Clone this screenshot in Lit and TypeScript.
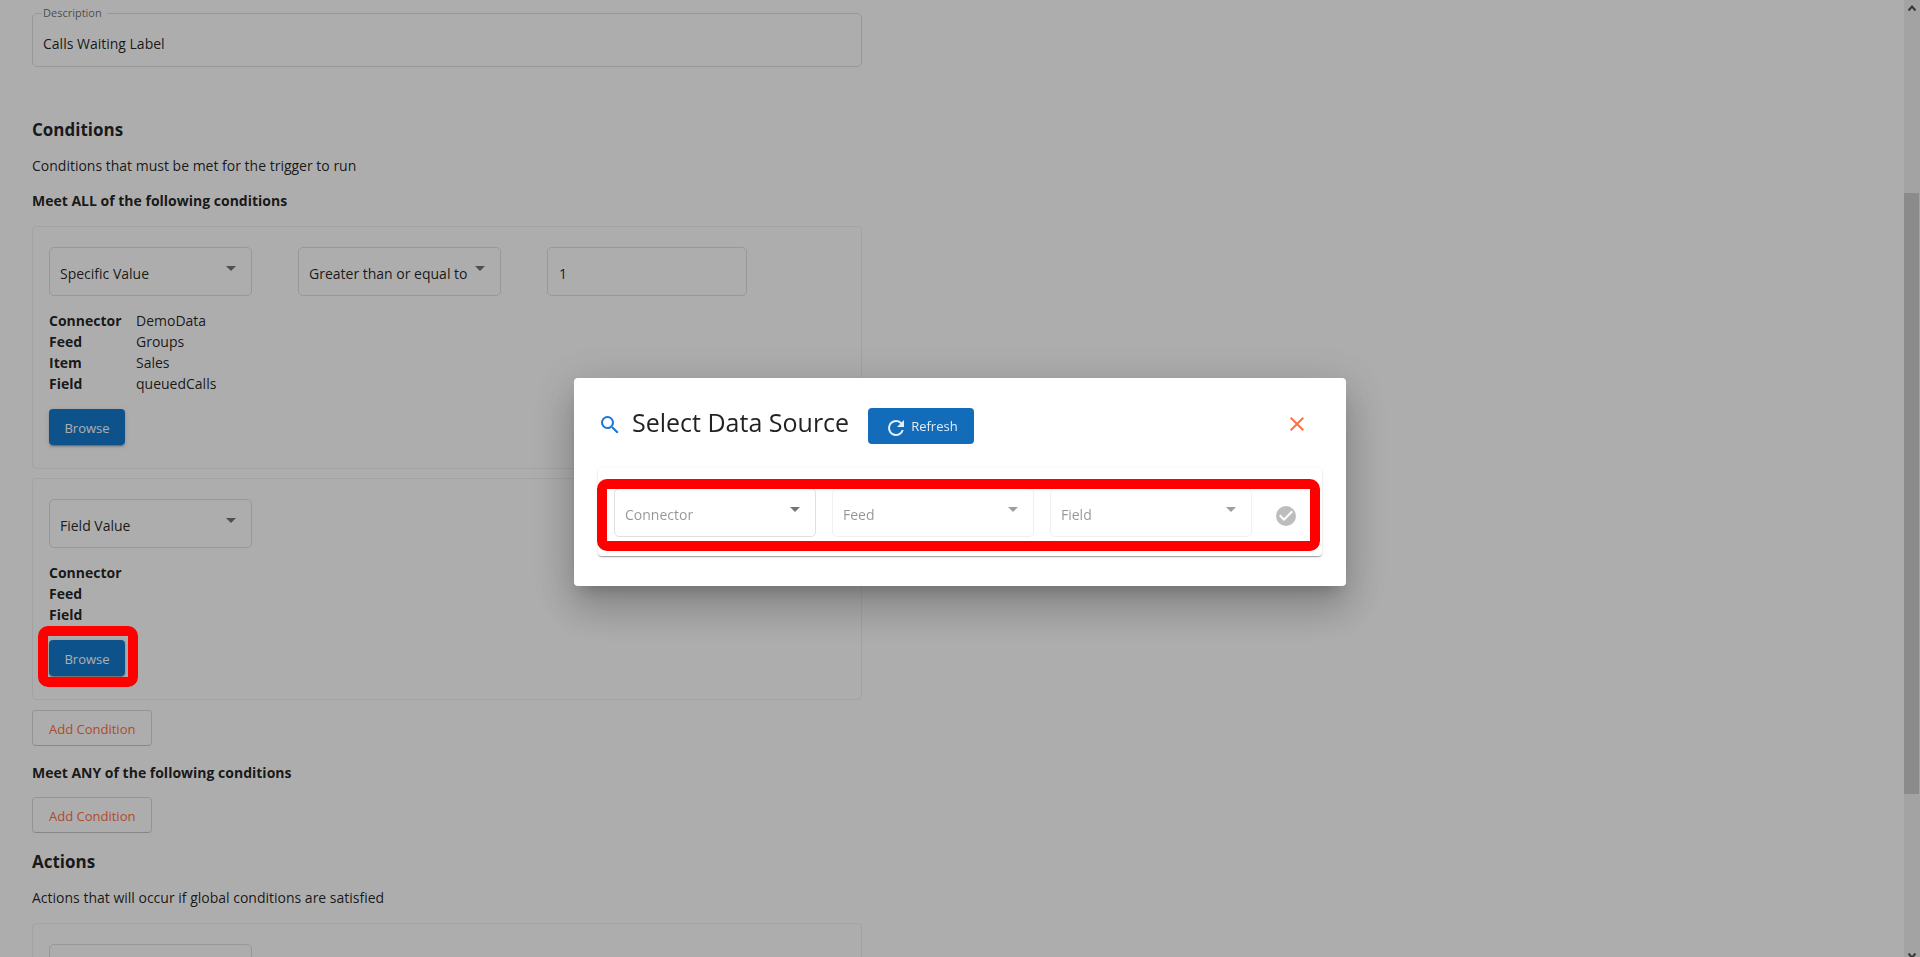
import { LitElement, html, css, svg, nothing } from "lit";
import { customElement, property } from "lit/decorators.js";

const ICONS = {
  search: svg`<path d="M15.5 14h-.79l-.28-.27A6.47 6.47 0 0 0 16 9.5 6.5 6.5 0 1 0 9.5 16c1.61 0 3.09-.59 4.23-1.57l.27.28v.79l5 4.99L20.49 19l-4.99-5zm-6 0C7.01 14 5 11.99 5 9.5S7.01 5 9.5 5 14 7.01 14 9.5 11.99 14 9.5 14z"/>`,
  refresh: svg`<path d="M17.65 6.35A7.96 7.96 0 0 0 12 4a8 8 0 1 0 7.73 10h-2.08A6 6 0 1 1 12 6c1.66 0 3.14.69 4.22 1.78L13 11h7V4l-2.35 2.35z"/>`,
  close: svg`<path d="M19 6.41 17.59 5 12 10.59 6.41 5 5 6.41 10.59 12 5 17.59 6.41 19 12 13.41 17.59 19 19 17.59 13.41 12z"/>`,
  check: svg`<path d="M12 2a10 10 0 1 0 0 20 10 10 0 0 0 0-20zm-2 15-5-5 1.41-1.41L10 14.17l7.59-7.59L19 8l-9 9z"/>`,
};

const icon = (name: keyof typeof ICONS) =>
  html`<svg class="icon" viewBox="0 0 24 24" width="24" height="24" aria-hidden="true">${ICONS[name]}</svg>`;

const controls = css`
  * { box-sizing: border-box; }
  button {
    font: inherit;
    font-size: 13px;
    line-height: 20px;
    height: 36px;
    padding: 2px 15px 0;
    border: 0;
    border-radius: 4px;
    cursor: pointer;
  }
  .primary {
    min-width: 76px;
    background: #167ace;
    color: #fff;
    box-shadow: 0 3px 1px -2px rgba(0, 0, 0, 0.2), 0 2px 2px rgba(0, 0, 0, 0.14), 0 1px 5px rgba(0, 0, 0, 0.12);
  }
  .icon { fill: currentColor; display: block; flex: none; }
  .callout {
    position: absolute;
    border: 10px solid #f00;
    border-radius: 10px;
    pointer-events: none;
    z-index: 3;
  }
`;

@customElement("select-box")
export class SelectBox extends LitElement {
  @property() label = "";
  @property() value = "";
  @property({ type: Boolean }) placeholder = false;
  @property({ type: Boolean }) disabled = false;

  static styles = css`
    :host { display: block; }
    * { box-sizing: border-box; }
    .box { position: relative; display: block; }
    select {
      appearance: none;
      display: block;
      width: 100%;
      height: 49px;
      margin: 0;
      padding: 4px 24px 0 10px;
      border: 1px solid rgba(0, 0, 0, 0.12);
      border-radius: 5px;
      background: transparent;
      font: inherit;
      color: rgba(0, 0, 0, 0.87);
      opacity: 1;
    }
    .placeholder { color: rgba(0, 0, 0, 0.42); }
    select:disabled { border-color: rgba(0, 0, 0, 0.06); }
    .arrow {
      position: absolute;
      right: 16px;
      top: 19px;
      border: 5px solid transparent;
      border-top-color: rgba(0, 0, 0, 0.54);
      border-bottom: 0;
      pointer-events: none;
    }
    select:disabled + .arrow { border-top-color: rgba(0, 0, 0, 0.38); }
  `;

  render() {
    return html`<span class="box">
      <select class=${this.placeholder ? "placeholder" : ""} aria-label=${this.label} ?disabled=${this.disabled}>
        ${this.value ? html`<option>${this.value}</option>` : nothing}
      </select>
      <span class="arrow"></span>
    </span>`;
  }
}

type Row = [string, string];

@customElement("condition-card")
export class ConditionCard extends LitElement {
  @property() source = "";
  @property() operator = "";
  @property() operand = "";
  @property({ attribute: false }) rows: Row[] = [];
  @property({ type: Boolean }) highlighted = false;

  static styles = [
    controls,
    css`
      :host {
        display: block;
        padding: 20px 16px 23px;
        border: 1px solid rgba(0, 0, 0, 0.06);
        border-radius: 4px;
      }
      .fields { display: grid; grid-template-columns: 203px 203px 200px; gap: 46px; }
      input {
        width: 100%;
        height: 49px;
        padding: 3px 11px 0;
        border: 1px solid rgba(0, 0, 0, 0.12);
        border-radius: 5px;
        background: transparent;
        font: inherit;
        color: rgba(0, 0, 0, 0.87);
      }
      dl {
        display: grid;
        grid-template-columns: 87px 1fr;
        margin: 14px 0 15px;
        line-height: 21px;
      }
      dt { font-weight: 700; }
      dd { margin: 0; }
      .action { position: relative; display: block; width: max-content; }
      .around { inset: -14px -13px -11px -11px; }
    `,
  ];

  render() {
    return html`
      <div class="fields">
        <select-box label="Value type" value=${this.source}></select-box>
        ${this.operator
          ? html`<select-box label="Comparison" value=${this.operator}></select-box>
              <input aria-label="Value" .value=${this.operand} />`
          : nothing}
      </div>
      ${this.rows.length
        ? html`<dl>${this.rows.map(([k, v]) => html`<dt>${k}</dt><dd>${v}</dd>`)}</dl>
            <div class="action">
              <button class="primary" type="button">Browse</button>
              ${this.highlighted ? html`<span class="callout around"></span>` : nothing}
            </div>`
        : nothing}
    `;
  }
}

@customElement("source-dialog")
export class SourceDialog extends LitElement {
  static styles = [
    controls,
    css`
      :host {
        position: fixed;
        inset: 0;
        z-index: 2;
        display: flex;
        align-items: center;
        justify-content: center;
        padding-top: 7px;
        background: rgba(0, 0, 0, 0.32);
      }
      .dialog {
        width: 772px;
        max-width: 90vw;
        padding: 30px 24px;
        border-radius: 4px;
        background: #fff;
        box-shadow: 0 11px 15px -7px rgba(0, 0, 0, 0.2), 0 24px 38px 3px rgba(0, 0, 0, 0.14),
          0 9px 46px 8px rgba(0, 0, 0, 0.12);
      }
      header { display: flex; align-items: flex-start; height: 36px; }
      .search { color: #1976d2; padding-top: 5px; }
      h2 { margin: 0 19px 0 10px; font-size: 25px; line-height: 28px; font-weight: 400; }
      .refresh {
        display: flex;
        align-items: center;
        gap: 3px;
        padding: 0 16px;
        background: #136cb9;
        color: rgba(255, 255, 255, 0.87);
      }
      .refresh .icon { margin-top: 4px; }
      .close {
        margin-left: auto;
        margin-right: 13px;
        padding: 0;
        height: 32px;
        background: none;
        color: #ff7043;
      }
      .picker {
        position: relative;
        display: grid;
        grid-template-columns: repeat(3, 1fr) 30px;
        column-gap: 16px;
        align-items: center;
        margin-top: 24px;
        padding: 20px 24px 19px 16px;
        border-radius: 4px;
        box-shadow: 0 2px 1px -1px rgba(0, 0, 0, 0.2), 0 1px 1px rgba(0, 0, 0, 0.14), 0 1px 3px rgba(0, 0, 0, 0.12);
      }
      .confirm { display: grid; place-items: center end; padding: 6px 0 0; background: none; color: #bdbdbd; }
      .around { inset: 11px 2px 5px -1px; }
    `,
  ];

  render() {
    return html`
      <section class="dialog" role="dialog" aria-modal="true" aria-labelledby="title">
        <header>
          <span class="search">${icon("search")}</span>
          <h2 id="title">Select Data Source</h2>
          <button class="refresh" type="button">${icon("refresh")}Refresh</button>
          <button class="close" type="button" aria-label="Close">${icon("close")}</button>
        </header>
        <div class="picker">
          <select-box label="Connector" value="Connector" placeholder></select-box>
          <select-box label="Feed" value="Feed" placeholder disabled></select-box>
          <select-box label="Field" value="Field" placeholder disabled></select-box>
          <button class="confirm" type="button" aria-label="Confirm" disabled>${icon("check")}</button>
          <span class="callout around"></span>
        </div>
      </section>
    `;
  }
}

@customElement("app-root")
export class AppRoot extends LitElement {
  static styles = [
    controls,
    css`
      :host {
        display: flex;
        height: 100vh;
        overflow: hidden;
        background: #fff;
        color: rgba(0, 0, 0, 0.87);
        font-family: "Segoe UI", "Open Sans", "Noto Sans", sans-serif;
        font-size: 14px;
        line-height: 20px;
      }
      main { flex: 1; padding: 4px 32px 0; }
      .form { max-width: 830px; }
      fieldset {
        height: 63px;
        margin: 0 0 51px;
        padding: 0 10px;
        border: 1px solid rgba(0, 0, 0, 0.12);
        border-radius: 5px;
      }
      legend { padding: 0 5px 0 1px; margin-left: -1px; font-size: 11px; line-height: 18px; color: rgba(0, 0, 0, 0.6); }
      .description {
        display: block;
        width: 100%;
        height: 26px;
        margin-top: 8px;
        padding: 0;
        border: 0;
        background: none;
        font: inherit;
        color: inherit;
      }
      h3, h4 { margin: 0; font-weight: 700; }
      h3 { font-size: 17px; line-height: 24px; }
      h4 { font-size: 14px; line-height: 20px; }
      p { margin: 14px 0 15px; }
      .cards { display: grid; gap: 9px; margin: 15px 0 10px; }
      .add {
        display: block;
        padding: 2px 16px 0;
        background: none;
        border: 1px solid rgba(0, 0, 0, 0.14);
        border-bottom-color: rgba(0, 0, 0, 0.22);
        color: #ff7043;
      }
      .add + h4 { margin: 17px 0 14px; }
      .add + h3 { margin-top: 17px; }
      .scrollbar {
        width: 16px;
        display: flex;
        flex-direction: column;
        background: #f0f0f0;
      }
      .scrollbar svg { display: block; margin-left: 4px; flex: none; }
      .thumb { width: 15px; background: #cdcdcd; flex: 601; }
      .before { flex: 181; }
      .after { flex: 159; }
    `,
  ];

  render() {
    return html`
      <main>
        <div class="form">
          <fieldset>
            <legend><label for="description">Description</label></legend>
            <input class="description" id="description" value="Calls Waiting Label" />
          </fieldset>
          <h3>Conditions</h3>
          <p>Conditions that must be met for the trigger to run</p>
          <h4>Meet ALL of the following conditions</h4>
          <div class="cards">
            <condition-card
              source="Specific Value"
              operator="Greater than or equal to"
              operand="1"
              .rows=${[["Connector", "DemoData"], ["Feed", "Groups"], ["Item", "Sales"], ["Field", "queuedCalls"]]}
            ></condition-card>
            <condition-card
              source="Field Value"
              .rows=${[["Connector", ""], ["Feed", ""], ["Field", ""]]}
              highlighted
            ></condition-card>
          </div>
          <button class="add" type="button">Add Condition</button>
          <h4>Meet ANY of the following conditions</h4>
          <button class="add" type="button">Add Condition</button>
          <h3>Actions</h3>
          <p>Actions that will occur if global conditions are satisfied</p>
          <condition-card></condition-card>
        </div>
      </main>
      <div class="scrollbar" aria-hidden="true">
        <svg width="8" height="12" viewBox="0 0 8 12"><path d="M.5 10.500 4 6.500l3.500 4" fill="none" stroke="#505050" stroke-width="2"/></svg>
        <span class="before"></span>
        <span class="thumb"></span>
        <span class="after"></span>
        <svg width="8" height="4" viewBox="0 0 8 4"><path d="M.5 .5 4 4.500l3.500-4" fill="none" stroke="#505050" stroke-width="2"/></svg>
      </div>
      <source-dialog></source-dialog>
    `;
  }
}
